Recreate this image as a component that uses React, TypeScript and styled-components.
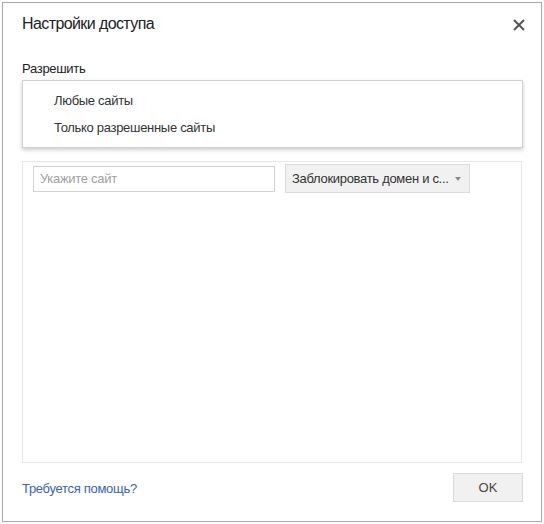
import React from "react";
import styled, { createGlobalStyle } from "styled-components";

const Global = createGlobalStyle`
  html, body { margin: 0; padding: 0; background: #ffffff; }
  body { font-family: "Liberation Sans", Arial, sans-serif; letter-spacing: -0.3px; }
  * { box-sizing: border-box; }
`;

const Dialog = styled.div`
  margin: 2px;
  width: 540px;
  height: 520px;
  border: 1px solid #a9a9a9;
  background: #fff;
  display: flex;
  flex-direction: column;
  padding: 0 19px 19px 19px;
`;

const Header = styled.div`
  display: flex;
  align-items: center;
  justify-content: space-between;
  padding-top: 11px;
  height: 31px;
`;

const Title = styled.h1`
  margin: 0;
  font-size: 16px;
  line-height: 20px;
  font-weight: normal;
  letter-spacing: -0.6px;
  color: #222;
`;

const CloseButton = styled.button`
  border: 0;
  background: none;
  padding: 0;
  width: 12px;
  height: 12px;
  margin-right: -3px;
  margin-top: 2px;
  display: flex;
  cursor: pointer;
`;

const Label = styled.div`
  margin-top: 27px;
  font-size: 13px;
  line-height: 16px;
  color: #222;
`;

const FieldArea = styled.div`
  position: relative;
  margin-top: 3px;
  height: 81px;
`;

const Menu = styled.ul`
  position: absolute;
  top: 0;
  left: 0;
  right: -1px;
  margin: 0;
  padding: 6px 0;
  list-style: none;
  background: #fff;
  border: 1px solid #d0d0d0;
  box-shadow: 0 2px 4px rgba(0, 0, 0, 0.2);
  z-index: 2;
`;

const MenuItem = styled.li`
  height: 27px;
  line-height: 27px;
  padding-left: 31px;
  font-size: 13px;
  color: #333;
`;

const ListBox = styled.div`
  flex: 1;
  border: 1px solid #e6e6e6;
  padding: 2px 10px;
`;

const EntryRow = styled.div`
  display: flex;
  align-items: center;
  gap: 10px;
`;

const SiteInput = styled.input`
  width: 242px;
  height: 26px;
  border: 1px solid #d2d2d2;
  padding: 0 6px;
  font-family: "Liberation Sans", Arial, sans-serif;
  letter-spacing: -0.3px;
  font-size: 13px;
  color: #333;
  outline: none;
  &::placeholder { color: #a0a0a0; }
`;

const ActionSelect = styled.div`
  width: 185px;
  height: 29px;
  border: 1px solid #dcdcdc;
  background: #f1f1f1;
  display: flex;
  align-items: center;
  justify-content: space-between;
  padding: 0 8px 0 6px;
  font-size: 13px;
  color: #333;
  white-space: nowrap;
`;

const Arrow = styled.span`
  width: 0;
  height: 0;
  border-left: 3.5px solid transparent;
  border-right: 3.5px solid transparent;
  border-top: 4px solid #8a8a8a;
`;

const Footer = styled.div`
  margin-top: 10px;
  height: 29px;
  display: flex;
  align-items: center;
  justify-content: space-between;
`;

const HelpLink = styled.a`
  font-size: 13px;
  color: #3b63b5;
  text-decoration: none;
  margin-top: 2px;
`;

const OkButton = styled.button`
  width: 70px;
  height: 29px;
  border: 1px solid #dadada;
  background: #f1f1f1;
  font-family: "Liberation Sans", Arial, sans-serif;
  font-size: 13px;
  color: #444;
  margin-right: -1px;
`;

export default function App() {
  return (
    <>
      <Global />
      <Dialog>
        <Header>
          <Title>Настройки доступа</Title>
          <CloseButton aria-label="Закрыть">
            <svg width="12" height="12" viewBox="0 0 12 12">
              <path d="M1 1 L11 11 M11 1 L1 11" stroke="#555" strokeWidth="2" />
            </svg>
          </CloseButton>
        </Header>
        <Label>Разрешить</Label>
        <FieldArea>
          <Menu>
            <MenuItem>Любые сайты</MenuItem>
            <MenuItem>Только разрешенные сайты</MenuItem>
          </Menu>
        </FieldArea>
        <ListBox>
          <EntryRow>
            <SiteInput placeholder="Укажите сайт" />
            <ActionSelect>
              <span>Заблокировать домен и с...</span>
              <Arrow />
            </ActionSelect>
          </EntryRow>
        </ListBox>
        <Footer>
          <HelpLink href="#">Требуется помощь?</HelpLink>
          <OkButton>OK</OkButton>
        </Footer>
      </Dialog>
    </>
  );
}
